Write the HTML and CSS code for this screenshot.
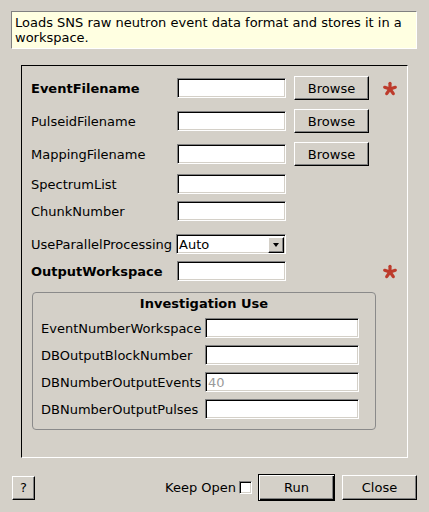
FILE: index.html
```html
<!DOCTYPE html>
<html>
<head>
<meta charset="utf-8">
<link rel="stylesheet" href="styles.css">
</head>
<body>
<div class="desc">Loads SNS raw neutron event data format and stores it in a<br>workspace.</div>

<div class="frame">
  <div class="row tall">
    <span class="lbl bold">EventFilename</span>
    <input class="field" type="text">
    <button class="btn browse">Browse</button>
    <svg class="star" viewBox="0 0 16 15"><g stroke="#bd3b2c" stroke-width="3.2" stroke-linecap="round"><line x1="8" y1="8" x2="8" y2="2.3"/><line x1="8" y1="8" x2="13.3" y2="6.3"/><line x1="8" y1="8" x2="2.7" y2="6.3"/><line x1="8" y1="8" x2="11.3" y2="12.6"/><line x1="8" y1="8" x2="4.7" y2="12.6"/></g></svg>
  </div>
  <div class="row tall gap9">
    <span class="lbl">PulseidFilename</span>
    <input class="field" type="text">
    <button class="btn browse">Browse</button>
  </div>
  <div class="row tall gap9">
    <span class="lbl">MappingFilename</span>
    <input class="field" type="text">
    <button class="btn browse">Browse</button>
  </div>
  <div class="row gap8">
    <span class="lbl">SpectrumList</span>
    <input class="field" type="text">
  </div>
  <div class="row gap7">
    <span class="lbl">ChunkNumber</span>
    <input class="field" type="text">
  </div>
  <div class="row gap13">
    <span class="lbl">UseParallelProcessing</span>
    <div class="combo"><span class="combo-text">Auto</span><span class="combo-btn"><span class="arrow"></span></span></div>
  </div>
  <div class="row gap7">
    <span class="lbl bold">OutputWorkspace</span>
    <input class="field" type="text">
    <svg class="star star-far" viewBox="0 0 16 15"><g stroke="#bd3b2c" stroke-width="3.2" stroke-linecap="round"><line x1="8" y1="8" x2="8" y2="2.3"/><line x1="8" y1="8" x2="13.3" y2="6.3"/><line x1="8" y1="8" x2="2.7" y2="6.3"/><line x1="8" y1="8" x2="11.3" y2="12.6"/><line x1="8" y1="8" x2="4.7" y2="12.6"/></g></svg>
  </div>

  <div class="group">
    <div class="group-title">Investigation Use</div>
    <div class="grow">
      <span class="glbl">EventNumberWorkspace</span>
      <input class="field wide" type="text">
    </div>
    <div class="grow">
      <span class="glbl">DBOutputBlockNumber</span>
      <input class="field wide" type="text">
    </div>
    <div class="grow">
      <span class="glbl">DBNumberOutputEvents</span>
      <input class="field wide" type="text" placeholder="40">
    </div>
    <div class="grow">
      <span class="glbl">DBNumberOutputPulses</span>
      <input class="field wide" type="text">
    </div>
  </div>
</div>

<div class="bottom">
  <button class="btn help">?</button>
  <span class="spacer"></span>
  <span class="keep">Keep Open</span>
  <span class="check"></span>
  <button class="btn run">Run</button>
  <button class="btn close">Close</button>
</div>
</body>
</html>
```
FILE: styles.css
```css
* { box-sizing: border-box; }

body {
  margin: 0;
  width: 429px;
  height: 512px;
  overflow: hidden;
  background: #d4d0c8;
  font-family: "DejaVu Sans", "Liberation Sans", sans-serif;
  font-size: 13px;
  color: #000;
}

.desc {
  margin: 11px 12px 0 11px;
  height: 38px;
  border: 1px solid;
  border-color: #808080 #ffffff #ffffff #808080;
  background: #ffffe1;
  padding: 3px 3px;
  line-height: 15px;
  white-space: nowrap;
}

.frame {
  margin: 16px 0 0 21px;
  width: 387px;
  height: 393px;
  border: 1px solid;
  border-color: #000 #fff #fff #000;
  padding: 10px 0 0 9px;
}

.row {
  display: flex;
  align-items: center;
  height: 20px;
}
.row.tall { height: 24px; }
.gap7 { margin-top: 7px; }
.gap8 { margin-top: 8px; }
.gap9 { margin-top: 9px; }
.gap13 { margin-top: 13px; }

.lbl {
  width: 146px;
  flex: none;
  white-space: nowrap;
}
.bold { font-weight: bold; }

.field {
  width: 109px;
  height: 20px;
  flex: none;
  margin: 0;
  padding: 0 2px;
  font: inherit;
  background: #fff;
  border: 1px solid;
  border-color: #808080 #ffffff #ffffff #808080;
  box-shadow: inset 1px 1px 0 #000, inset -1px -1px 0 #d4d0c8;
  outline: none;
}
.field.wide { width: 154px; }
.field::placeholder { color: #9a9a9a; }

.btn {
  margin: 0;
  padding: 0;
  font: inherit;
  color: #000;
  background: #d4d0c8;
  border: 1px solid;
  border-color: #ffffff #000 #000 #ffffff;
  box-shadow: inset -1px -1px 0 #808080;
  flex: none;
}
.browse {
  width: 75px;
  height: 24px;
  margin-left: 8px;
}

.star {
  width: 16px;
  height: 15px;
  flex: none;
  margin-left: 13px;
}
.star-far { margin-left: 96px; }

.combo {
  width: 110px;
  height: 20px;
  margin-left: -1px;
  flex: none;
  display: flex;
  align-items: center;
  background: #fff;
  border: 1px solid;
  border-color: #808080 #ffffff #ffffff #808080;
  box-shadow: inset 1px 1px 0 #000, inset -1px -1px 0 #d4d0c8;
  padding: 2px 1px 1px 2px;
}
.combo-text {
  flex: 1;
  padding-left: 0;
}
.combo-btn {
  width: 16px;
  height: 16px;
  display: flex;
  align-items: center;
  justify-content: center;
  background: #d4d0c8;
  border: 1px solid;
  border-color: #ffffff #000 #000 #ffffff;
  box-shadow: inset -1px -1px 0 #808080;
}
.arrow {
  width: 0;
  height: 0;
  border-left: 3.5px solid transparent;
  border-right: 3.5px solid transparent;
  border-top: 4px solid #000;
  margin-top: 1px;
}

.group {
  margin: 11px 0 0 1px;
  width: 344px;
  border: 1px solid #8a8a8a;
  border-radius: 4px;
  padding: 3px 0 10px 8px;
}
.group-title {
  font-weight: bold;
  text-align: center;
  line-height: 15px;
  margin-left: -8px;
  margin-bottom: 7px;
}
.grow {
  display: flex;
  align-items: center;
  height: 20px;
}
.grow + .grow { margin-top: 7px; }
.glbl {
  width: 164px;
  flex: none;
  white-space: nowrap;
}

.bottom {
  display: flex;
  align-items: center;
  height: 27px;
  margin-top: 16px;
  padding: 0 12px;
}
.help {
  width: 23px;
  height: 24px;
}
.spacer { flex: 1; }
.keep { white-space: nowrap; }
.check {
  width: 13px;
  height: 13px;
  margin-left: 3px;
  background: #fff;
  border: 1px solid;
  border-color: #808080 #ffffff #ffffff #808080;
  box-shadow: inset 1px 1px 0 #000, inset -1px -1px 0 #d4d0c8;
}
.run {
  width: 77px;
  height: 27px;
  margin-left: 6px;
  border: 1px solid #000;
  box-shadow: inset 1px 1px 0 #fff, inset -1px -1px 0 #000, inset -2px -2px 0 #808080;
}
.close {
  width: 75px;
  height: 25px;
  margin-left: 7px;
}
```
